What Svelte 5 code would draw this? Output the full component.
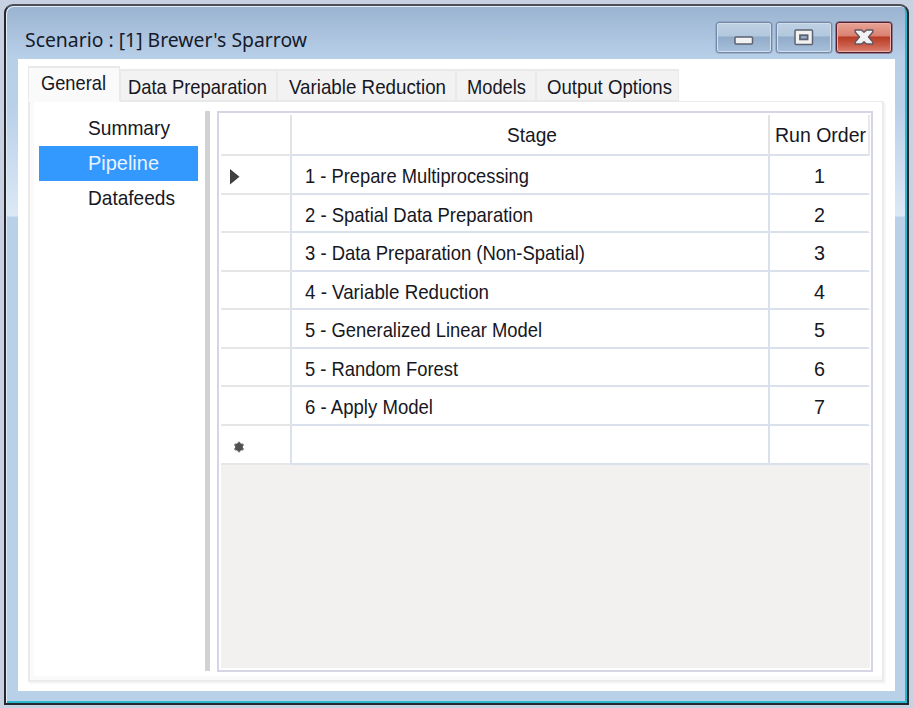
<script>
  const tabs = [
    { text: 'General', width: 92, pad: 12, length: 65, active: true },
    { text: 'Data Preparation', width: 157, pad: 7, length: 139 },
    { text: 'Variable Reduction', width: 179, pad: 11, length: 157 },
    { text: 'Models', width: 80, pad: 10, length: 59 },
    { text: 'Output Options', width: 143, pad: 10, length: 125 }
  ];
  const pages = [
    { text: 'Summary', length: 82 },
    { text: 'Pipeline', length: 71, active: true },
    { text: 'Datafeeds', length: 87 }
  ];
  const stages = [
    { text: '1 - Prepare Multiprocessing', length: 224, height: 39 },
    { text: '2 - Spatial Data Preparation', length: 228, height: 38 },
    { text: '3 - Data Preparation (Non-Spatial)', length: 280, height: 39 },
    { text: '4 - Variable Reduction', length: 184, height: 38 },
    { text: '5 - Generalized Linear Model', length: 237, height: 39 },
    { text: '5 - Random Forest', length: 153, height: 38 },
    { text: '6 - Apply Model', length: 128, height: 39 }
  ];
</script>

{#snippet label(text, length)}
  <svg class="label" width={length} height="24"><text x="0" y="19" textLength={length} lengthAdjust="spacingAndGlyphs">{text}</text></svg>
{/snippet}

<div class="desktop">
  <div class="window">
    <header>
      <svg class="title" width="284" height="30"><text x="0" y="21" textLength="282" lengthAdjust="spacingAndGlyphs">Scenario : [1] Brewer's Sparrow</text></svg>
      <div class="controls">
        <button aria-label="Minimize">
          <svg width="20" height="10"><rect x="1" y="1" width="17.500" height="7" rx="1" fill="#f2f2f2" stroke="#5c6272" stroke-width="1.500" /></svg>
        </button>
        <button aria-label="Maximize">
          <svg width="20" height="17"><rect x="1" y="1" width="17.500" height="14.500" rx="1" fill="#f2f2f2" stroke="#5c6272" stroke-width="1.500" /><rect x="6" y="6.200" width="7.600" height="4.200" fill="#91aecb" stroke="#5c6272" stroke-width="1.800" /></svg>
        </button>
        <button class="close" aria-label="Close">
          <svg width="20" height="17"><path d="M1.200 1H7.500L10 3.300 12.500 1h6.300v2L14.500 8l4.300 5v2h-6.300L10 12.700 7.500 15H1.200v-2l4.300-5L1.200 3z" fill="#f2f2f2" stroke="#5f5663" stroke-width="1.400" stroke-linejoin="round" /></svg>
        </button>
      </div>
    </header>

    <main>
      <nav class="tabs">
        {#each tabs as tab}
          <div class="tab" class:active={tab.active} style="width:{tab.width}px;padding-left:{tab.pad}px">{@render label(tab.text, tab.length)}</div>
        {/each}
      </nav>
      <section>
        <aside>
          {#each pages as page}
            <div class="page" class:active={page.active}>{@render label(page.text, page.length)}</div>
          {/each}
        </aside>
        <div class="splitter"></div>
        <div class="grid">
          <div class="row head">
            <div class="mark"></div>
            <div class="stage">{@render label('Stage', 50)}</div>
            <div class="order">{@render label('Run Order', 91)}</div>
          </div>
          {#each stages as stage, i}
            <div class="row" style="height:{stage.height}px">
              <div class="mark">
                {#if i === 0}<svg width="11" height="18"><path d="M1 1v15.500l9.500-7.750z" fill="#404040" /></svg>{/if}
              </div>
              <div class="stage">{@render label(stage.text, stage.length)}</div>
              <div class="order">{@render label(String(i + 1), 11)}</div>
            </div>
          {/each}
          <div class="row last">
            <div class="mark">
              <svg class="star" width="12" height="12"><path d="M6 .8v10.400M1.500 3.200l9 5.600M1.500 8.800l9-5.600" stroke="#777" stroke-width="2.400" /><circle cx="6" cy="6" r="3.900" fill="#505050" /></svg>
            </div>
            <div class="stage"></div>
            <div class="order"></div>
          </div>
        </div>
      </section>
    </main>
  </div>
</div>

<style>
  * { box-sizing: border-box; }
  .desktop {
    width: 913px;
    height: 708px;
    padding: 4px 4px 3px 4px;
    background: #c8d1e1;
    font-family: "Liberation Sans", Arial, sans-serif;
    overflow: hidden;
  }
  .window {
    width: 905px;
    height: 701px;
    border: 2px solid #25272c;
    border-top-color: #4b4f57;
    border-radius: 9px 9px 0 0;
    padding: 0 11px 11px 12px;
    background:
      linear-gradient(#9ab3d0, #b8cfe8 51px, transparent 51px),
      linear-gradient(#b8cfe8 51px, #b9d0e9 100px, #dce8f5 210px, #b9d0e9 211px);
    box-shadow: inset 1px 1px #e4edf6, inset -2px -2px #2bb8ce;
  }
  header {
    height: 53px;
    display: flex;
    justify-content: space-between;
    padding: 15px 4px 0 7px;
  }
  svg { display: block; flex: none; overflow: visible; }
  .title { margin-top: 5px; font: 20.8px "Noto Sans", "Open Sans", sans-serif; fill: #161a2b; }
  .label { font-size: 20.8px; fill: #171722; }
  .controls { display: flex; gap: 4px; margin-top: 1px; }
  button {
    width: 56px;
    height: 31px;
    padding: 4px 0 0;
    display: flex;
    align-items: center;
    justify-content: center;
    border: 1.5px solid #7388a5;
    border-radius: 3px;
    background: linear-gradient(#bfd0e3, #b2c8de 45%, #91abc8 48%, #a7c0dc);
    box-shadow: inset 0 0 0 1px #d3dfed, 0 0 0 .5px #8197b3;
  }
  button:nth-child(1) { padding-top: 6px; }
  button:nth-child(2), button:nth-child(3) { padding-top: 0; padding-bottom: 1px; }
  button.close {
    border-color: #561d2c;
    background: linear-gradient(#e7a395, #d98170 45%, #b63c25 48%, #ca5a45 75%, #d98473);
    box-shadow: inset 0 0 0 1px #e9b3a9, 0 0 0 .5px #693445;
  }
  main {
    height: 632px;
    width: 877px;
    background: #fff;
    padding: 7px 11px 8px 10px;
  }
  .tabs { height: 36px; display: flex; align-items: flex-end; position: relative; z-index: 1; }
  .tab {
    height: 33px;
    padding-top: 4px;
    background: #f2f2f2;
    border: solid #e9e9e9;
    border-width: 2px 1px 2px 1px;
  }
  .tab.active {
    height: 36px;
    padding-top: 3px;
    background: #fafafa;
    border-bottom-color: #fafafa;
  }
  section {
    display: flex;
    height: 581px;
    width: 856px;
    margin-top: -1px;
    padding: 9px 8px 9px 5px;
    border: 2px solid #ebebeb;
    border-top-width: 1px;
    box-shadow: inset 4px -4px #fafafa, 2px 2px #f7f7f7;
  }
  aside { width: 170px; padding-left: 4px; flex: none; }
  .page { height: 35px; width: 159px; padding: 5px 0 0 49px; }
  .page.active { background: #3399ff; }
  .page.active :global(.label) { fill: #e9f3ff; }
  .splitter { width: 5px; height: 560px; margin-right: 7px; background: #d2d2d2; flex: none; }
  .grid {
    width: 656px;
    height: 561px;
    padding: 2px 1px 2px 2px;
    border: 2px solid #d6d5e6;
    background: #f2f1ef content-box;
    flex: none;
  }
  .row { display: flex; width: 649px; background: #fff; }
  .row > div { border: solid #dae0ec; border-width: 0 2px 2px 0; display: flex; flex: none; }
  .row > .mark { width: 71px; border-bottom-color: #e6e6e6; padding: 12px 0 0 8px; }
  .row > .stage { width: 478px; padding: 8px 0 0 13px; }
  .row > .order { width: 100px; justify-content: center; padding-top: 8px; border-right-color: #fff; }
  .head { height: 41px; }
  .row.head > .mark { border-right-color: #e3e3e3; }
  .row.head > .stage { justify-content: center; padding: 8px 0 0 3px; border-right-color: #e3e3e3; }
  .row.head > .order { border-right-color: #e9e9e9; padding: 8px 0 0 2px; }
  .last { height: 39px; }
  .row > .mark .star { margin: 3px 0 0 4px; }
</style>
